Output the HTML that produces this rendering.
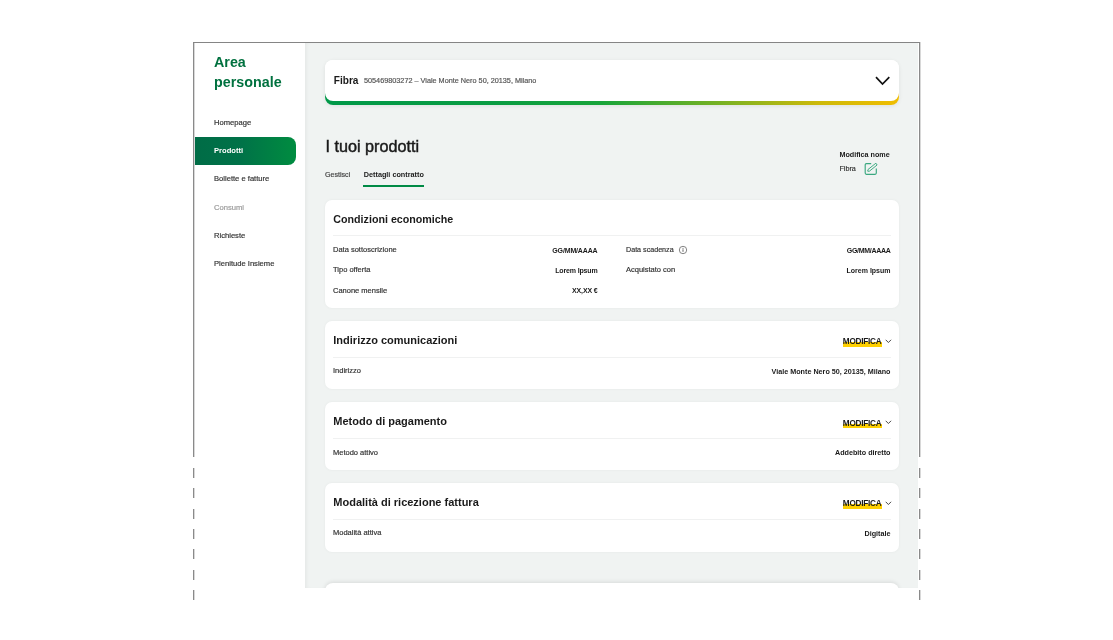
<!DOCTYPE html>
<html><head><meta charset="utf-8"><title>Area personale</title><style>
*{margin:0;padding:0;box-sizing:border-box}
html,body{width:1113px;height:640px;overflow:hidden;background:#fff;font-family:"Liberation Sans",sans-serif}
.wrap{position:absolute;left:0;top:0;width:1113px;height:640px;will-change:transform}
.t{position:absolute;white-space:nowrap;line-height:1}
.frame-top{position:absolute;left:193px;top:42px;width:727px;height:1px;background:#858585}
.bl{position:absolute;top:42px;width:1px;height:415px;background:#8a8a8a;box-shadow:1px 0 0 #d8d8d8}
.dash{position:absolute;width:1px;height:10px;background:#8a8a8a;box-shadow:1px 0 0 #d8d8d8}
.side{position:absolute;left:194.5px;top:43px;width:110.5px;height:414px;background:#fff}
.content{position:absolute;left:305px;top:43px;width:612.5px;height:545px;background:#f0f3f2;box-shadow:inset 3px 0 4px -2px rgba(0,0,0,0.06)}
.pill{position:absolute;left:194.5px;top:136.5px;width:101.5px;height:28px;border-radius:0 8px 8px 0;background:linear-gradient(90deg,#006c46 0%,#007248 45%,#008c40 100%)}
.hcard{position:absolute;left:324.5px;top:60px;width:574.5px;height:44.8px;border-radius:8px;background:linear-gradient(to bottom,#fff 0,#fff 60%,transparent 60%),linear-gradient(90deg,#009848 0%,#0a9c42 30%,#18a43a 48%,#7db222 70%,#cdb90a 86%,#f0bd00 100%);box-shadow:0 1px 4px rgba(0,0,0,0.08)}
.hcard-in{position:absolute;left:0;top:0;right:0;bottom:4.3px;background:#fff;border-radius:8px 8px 8px 8px}
.card{position:absolute;left:324.7px;width:574.3px;background:#fff;border-radius:7px;box-shadow:0 0 3px rgba(0,0,0,0.05)}
.div{position:absolute;left:332.5px;width:558.5px;height:1px;background:#f0f1f1}
.clip5{position:absolute;left:305px;top:560px;width:612.5px;height:28px;overflow:hidden}
.card5{position:absolute;left:19.7px;top:23.2px;width:574.3px;height:40px;background:#fff;border-radius:8px;box-shadow:0 -1px 4px rgba(0,0,0,0.10)}
</style></head><body>
<div class="wrap"><div class="side"></div><div class="content"></div><div class="bl solid" style="left:193px"></div><div class="bl solid" style="left:918.5px"></div><div class="frame-top"></div><div class="dash" style="left:193px;top:468px"></div><div class="dash" style="left:918.5px;top:468px"></div><div class="dash" style="left:193px;top:488.3px"></div><div class="dash" style="left:918.5px;top:488.3px"></div><div class="dash" style="left:193px;top:508.6px"></div><div class="dash" style="left:918.5px;top:508.6px"></div><div class="dash" style="left:193px;top:528.9px"></div><div class="dash" style="left:918.5px;top:528.9px"></div><div class="dash" style="left:193px;top:549.2px"></div><div class="dash" style="left:918.5px;top:549.2px"></div><div class="dash" style="left:193px;top:569.5px"></div><div class="dash" style="left:918.5px;top:569.5px"></div><div class="dash" style="left:193px;top:589.8px"></div><div class="dash" style="left:918.5px;top:589.8px"></div><div class="t" style="left:214px;top:53.96px;font-size:15.4px;font-weight:700;color:#00713f;transform:scaleX(0.93);transform-origin:0 0;">Area</div>
<div class="t" style="left:214px;top:73.76px;font-size:15.4px;font-weight:700;color:#00713f;transform:scaleX(0.93);transform-origin:0 0;">personale</div>
<div class="pill"></div><div class="t" style="left:214px;top:119.17px;font-size:7.6px;font-weight:400;color:#333;-webkit-text-stroke:0.18px #333;">Homepage</div>
<div class="t" style="left:214px;top:146.67px;font-size:7.6px;font-weight:700;color:#fff;">Prodotti</div>
<div class="t" style="left:214px;top:175.27px;font-size:7.6px;font-weight:400;color:#333;-webkit-text-stroke:0.18px #333;">Bollette e fatture</div>
<div class="t" style="left:214px;top:203.57px;font-size:7.6px;font-weight:400;color:#9a9a9a;-webkit-text-stroke:0.18px #9a9a9a;">Consumi</div>
<div class="t" style="left:214px;top:231.57px;font-size:7.6px;font-weight:400;color:#333;-webkit-text-stroke:0.18px #333;">Richieste</div>
<div class="t" style="left:214px;top:259.97px;font-size:7.6px;font-weight:400;color:#333;-webkit-text-stroke:0.18px #333;">Plenitude Insieme</div>
<div class="hcard"><div class="hcard-in"></div></div><div class="t" style="left:333.8px;top:76.05px;font-size:10.1px;font-weight:700;color:#1a1a1a;">Fibra</div>
<div class="t" style="left:364px;top:76.65px;font-size:7.27px;font-weight:400;color:#555;-webkit-text-stroke:0.18px #555;">505469803272 &ndash; Viale Monte Nero 50, 20135, Milano</div>
<svg class="chev" width="16" height="10" viewBox="0 0 16 10" style="position:absolute;left:875px;top:76px"><path d="M1 1.2 L7.5 8 L14.3 1.2" fill="none" stroke="#111" stroke-width="1.7"/></svg><div class="t" style="left:325.5px;top:137.89px;font-size:16.2px;font-weight:400;color:#1a1a1a;-webkit-text-stroke:0.45px #1a1a1a;">I tuoi prodotti</div>
<div class="t" style="left:325px;top:172.39px;font-size:7.1px;font-weight:400;color:#444;-webkit-text-stroke:0.18px #444;">Gestisci</div>
<div class="t" style="left:363.8px;top:171.26px;font-size:7.25px;font-weight:700;color:#1a1a1a;">Dettagli contratto</div>
<div style="position:absolute;left:363px;top:185px;width:61px;height:2px;background:#008a45"></div><div class="t" style="left:839.4px;top:151.21px;font-size:7.2px;font-weight:700;color:#1a1a1a;">Modifica nome</div>
<div class="t" style="left:839.4px;top:165.31px;font-size:7.2px;font-weight:400;color:#333;-webkit-text-stroke:0.18px #333;">Fibra</div>
<svg width="14" height="14" viewBox="0 0 14 14" style="position:absolute;left:864px;top:162px"><path d="M7.2 1.6 H2.4 Q1.2 1.6 1.2 2.8 V11.1 Q1.2 12.3 2.4 12.3 H11.1 Q12.3 12.3 12.3 11.1 V6.4" fill="none" stroke="#3aa880" stroke-width="1.15"/><path d="M3.7 9.2 L5.27 9.27 L13.1 3.0 L11.9 1.2 L4.0 7.5 Z" fill="none" stroke="#3aa880" stroke-width="0.95" stroke-linejoin="round"/></svg><div class="card" style="top:200px;height:107.75px"></div><div class="t" style="left:333.3px;top:213.84px;font-size:10.7px;font-weight:700;color:#1a1a1a;">Condizioni economiche</div>
<div class="div" style="top:235px"></div><div class="t" style="left:333px;top:246.25px;font-size:7.5px;font-weight:400;color:#333;-webkit-text-stroke:0.18px #333;">Data sottoscrizione</div>
<div class="t" style="right:515.5px;top:246.67px;font-size:7px;font-weight:700;color:#1a1a1a;letter-spacing:-0.15px;">GG/MM/AAAA</div>
<div class="t" style="left:333px;top:266.25px;font-size:7.5px;font-weight:400;color:#333;-webkit-text-stroke:0.18px #333;">Tipo offerta</div>
<div class="t" style="right:515.5px;top:266.67px;font-size:7px;font-weight:700;color:#1a1a1a;letter-spacing:-0.15px;">Lorem Ipsum</div>
<div class="t" style="left:333px;top:286.65px;font-size:7.5px;font-weight:400;color:#333;-webkit-text-stroke:0.18px #333;">Canone mensile</div>
<div class="t" style="right:515.5px;top:287.07px;font-size:7px;font-weight:700;color:#1a1a1a;letter-spacing:-0.15px;">XX,XX &euro;</div>
<div class="t" style="left:626px;top:246.55px;font-size:7.15px;font-weight:400;color:#333;-webkit-text-stroke:0.18px #333;">Data scadenza</div>
<svg width="10" height="10" viewBox="0 0 10 10" style="position:absolute;left:677.6px;top:245.3px"><circle cx="5" cy="5" r="3.7" fill="none" stroke="#666" stroke-width="0.8"/><rect x="4.55" y="4.3" width="0.9" height="2.5" fill="#555"/><rect x="4.55" y="2.9" width="0.9" height="0.9" fill="#555"/></svg><div class="t" style="right:222.5px;top:246.67px;font-size:7px;font-weight:700;color:#1a1a1a;letter-spacing:-0.3px;">GG/MM/AAAA</div>
<div class="t" style="left:626px;top:266.25px;font-size:7.5px;font-weight:400;color:#333;-webkit-text-stroke:0.18px #333;">Acquistato con</div>
<div class="t" style="right:222.5px;top:266.67px;font-size:7px;font-weight:700;color:#1a1a1a;">Lorem Ipsum</div>
<div class="card" style="top:321.25px;height:67.5px"></div><div class="t" style="left:333.3px;top:334.69px;font-size:11px;font-weight:700;color:#1a1a1a;">Indirizzo comunicazioni</div>
<div class="div" style="top:357px"></div><div style="position:absolute;left:843px;top:342.30px;width:39px;height:4.6px;background:#ffd000"></div><div class="t" style="right:231.5px;top:338.36px;font-size:8.2px;font-weight:700;color:#1a1a1a;letter-spacing:-0.22px;">MODIFICA</div>
<svg width="7" height="5" viewBox="0 0 7 5" style="position:absolute;left:885.3px;top:338.5px"><path d="M0.7 0.8 L3.4 3.5 L6.1 0.8" fill="none" stroke="#333" stroke-width="0.9"/></svg><div class="t" style="left:333px;top:367.40px;font-size:7.5px;font-weight:400;color:#333;-webkit-text-stroke:0.18px #333;">Indirizzo</div>
<div class="t" style="right:222.5px;top:367.66px;font-size:7.2px;font-weight:700;color:#1a1a1a;">Viale Monte Nero 50, 20135, Milano</div>
<div class="card" style="top:402.25px;height:67.5px"></div><div class="t" style="left:333.3px;top:416.29px;font-size:11px;font-weight:700;color:#1a1a1a;">Metodo di pagamento</div>
<div class="div" style="top:437.5px"></div><div style="position:absolute;left:843px;top:423.90px;width:39px;height:4.6px;background:#ffd000"></div><div class="t" style="right:231.5px;top:419.96px;font-size:8.2px;font-weight:700;color:#1a1a1a;letter-spacing:-0.22px;">MODIFICA</div>
<svg width="7" height="5" viewBox="0 0 7 5" style="position:absolute;left:885.3px;top:420.1px"><path d="M0.7 0.8 L3.4 3.5 L6.1 0.8" fill="none" stroke="#333" stroke-width="0.9"/></svg><div class="t" style="left:333px;top:448.65px;font-size:7.5px;font-weight:400;color:#333;-webkit-text-stroke:0.18px #333;">Metodo attivo</div>
<div class="t" style="right:222.5px;top:448.91px;font-size:7.2px;font-weight:700;color:#1a1a1a;">Addebito diretto</div>
<div class="card" style="top:483.1px;height:68.60000000000002px"></div><div class="t" style="left:333.3px;top:496.69px;font-size:11px;font-weight:700;color:#1a1a1a;">Modalità di ricezione fattura</div>
<div class="div" style="top:519px"></div><div style="position:absolute;left:843px;top:504.30px;width:39px;height:4.6px;background:#ffd000"></div><div class="t" style="right:231.5px;top:500.36px;font-size:8.2px;font-weight:700;color:#1a1a1a;letter-spacing:-0.22px;">MODIFICA</div>
<svg width="7" height="5" viewBox="0 0 7 5" style="position:absolute;left:885.3px;top:500.5px"><path d="M0.7 0.8 L3.4 3.5 L6.1 0.8" fill="none" stroke="#333" stroke-width="0.9"/></svg><div class="t" style="left:333px;top:529.25px;font-size:7.5px;font-weight:400;color:#333;-webkit-text-stroke:0.18px #333;">Modalità attiva</div>
<div class="t" style="right:222.5px;top:529.51px;font-size:7.2px;font-weight:700;color:#1a1a1a;">Digitale</div>
<div class="clip5"><div class="card5"></div></div></div></body></html>
